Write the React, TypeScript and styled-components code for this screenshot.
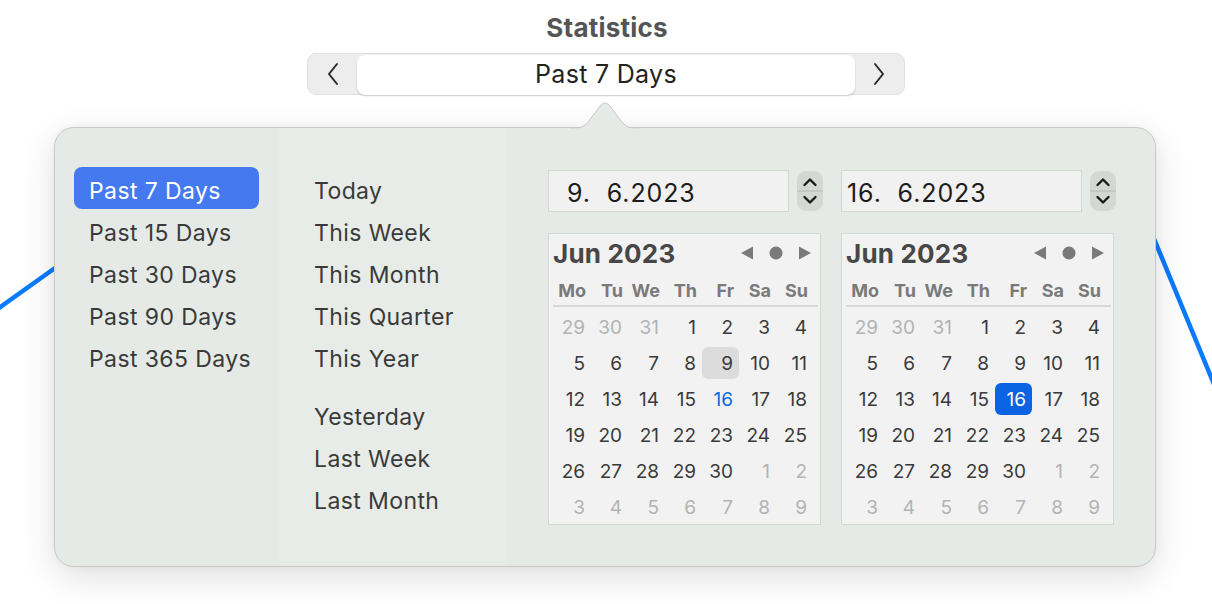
import React from 'react'
import styled, { createGlobalStyle } from 'styled-components'

const GlobalStyle = createGlobalStyle`
  html, body {
    margin: 0;
    padding: 0;
    background: #ffffff;
  }
  body {
    font-family: Inter, 'Noto Sans', 'Liberation Sans', sans-serif;
    color: #333333;
    -webkit-font-smoothing: antialiased;
  }
`

const presets = ['Past 7 Days', 'Past 15 Days', 'Past 30 Days', 'Past 90 Days', 'Past 365 Days']
const periods = ['Today', 'This Week', 'This Month', 'This Quarter', 'This Year']
const previous = ['Yesterday', 'Last Week', 'Last Month']
const weekdays = ['Mo', 'Tu', 'We', 'Th', 'Fr', 'Sa', 'Su']

type Day = { n: number; muted?: boolean }

function buildJune(): Day[][] {
  const days: Day[] = [
    { n: 29, muted: true },
    { n: 30, muted: true },
    { n: 31, muted: true },
  ]
  for (let i = 1; i <= 30; i++) days.push({ n: i })
  for (let i = 1; i <= 9; i++) days.push({ n: i, muted: true })
  const weeks: Day[][] = []
  for (let w = 0; w < 6; w++) weeks.push(days.slice(w * 7, w * 7 + 7))
  return weeks
}

const june = buildJune()

function Chevron({ dir }: { dir: 'left' | 'right' }) {
  return (
    <svg width="14" height="24" viewBox="0 0 14 24">
      <path
        d={dir === 'left' ? 'M11 2 L3 12 L11 22' : 'M3 2 L11 12 L3 22'}
        fill="none"
        stroke="#2a2a2a"
        strokeWidth="2"
        strokeLinecap="round"
        strokeLinejoin="round"
      />
    </svg>
  )
}

function Stepper() {
  return (
    <StepperBox>
      <svg width="26" height="40" viewBox="0 0 26 40">
        <path d="M7.5 14 L13 8.5 L18.5 14" fill="none" stroke="#1a1a1a" strokeWidth="2.4" strokeLinecap="round" strokeLinejoin="round" />
        <line x1="0" y1="20" x2="26" y2="20" stroke="#b5b9b5" strokeWidth="1.2" />
        <path d="M7.5 26 L13 31.5 L18.5 26" fill="none" stroke="#1a1a1a" strokeWidth="2.4" strokeLinecap="round" strokeLinejoin="round" />
      </svg>
    </StepperBox>
  )
}

function MonthNav() {
  return (
    <Nav>
      <svg width="70" height="16" viewBox="0 0 70 16">
        <path d="M0 8 L12 1.5 L12 14.5 Z" fill="#7a7a7a" />
        <circle cx="35" cy="8" r="6.5" fill="#7a7a7a" />
        <path d="M70 8 L58 1.5 L58 14.5 Z" fill="#7a7a7a" />
      </svg>
    </Nav>
  )
}

function Calendar({ mode }: { mode: 'start' | 'end' }) {
  return (
    <CalendarBox>
      <CalHeader>
        <MonthTitle>Jun 2023</MonthTitle>
        <MonthNav />
      </CalHeader>
      <WeekRow>
        {weekdays.map((d) => (
          <WeekdayCell key={d}>{d}</WeekdayCell>
        ))}
      </WeekRow>
      <Divider />
      <DayGrid>
        {june.map((week, wi) =>
          week.map((day, di) => {
            const current = !day.muted
            const isPicked = current && ((mode === 'start' && day.n === 9) || (mode === 'end' && day.n === 16))
            const isToday = current && day.n === 16
            return (
              <DayCell
                key={`${wi}-${di}`}
                $muted={!!day.muted}
                $today={isToday && mode === 'start'}
                $picked={isPicked ? (mode === 'end' ? 'blue' : 'gray') : undefined}
              >
                {day.n}
              </DayCell>
            )
          })
        )}
      </DayGrid>
    </CalendarBox>
  )
}

function DateColumn({ value, mode }: { value: string; mode: 'start' | 'end' }) {
  return (
    <DateStack>
      <FieldRow>
        <DateField $indent={mode === 'start'}>{value}</DateField>
        <Stepper />
      </FieldRow>
      <Calendar mode={mode} />
    </DateStack>
  )
}

export default function App() {
  return (
    <Page>
      <GlobalStyle />
      <Chart width="1212" height="604" viewBox="0 0 1212 604">
        <line x1="-4" y1="310" x2="62" y2="263" stroke="#0a7aff" strokeWidth="4.5" />
        <line x1="1150" y1="229" x2="1216" y2="389" stroke="#0a7aff" strokeWidth="4.5" />
      </Chart>
      <Content>
        <Title>Statistics</Title>
        <Segmented>
          <SegButton>
            <Chevron dir="left" />
          </SegButton>
          <SegLabel>Past 7 Days</SegLabel>
          <SegButton>
            <Chevron dir="right" />
          </SegButton>
        </Segmented>
        <Popover>
          <Arrow width="70" height="27" viewBox="0 0 70 27">
            <path
              d="M0 26.5 C10 26.5 14 25 18 20 L31 3 C33 0.5 37 0.5 39 3 L52 20 C56 25 60 26.5 70 26.5"
              fill="#e6eae6"
              stroke="#c6c9c6"
              strokeWidth="1"
            />
            <rect x="0" y="26.4" width="70" height="1" fill="#e6eae6" />
          </Arrow>
          <PresetColumn>
            {presets.map((p, i) => (
              <PresetItem key={p} $active={i === 0}>
                {p}
              </PresetItem>
            ))}
          </PresetColumn>
          <PeriodColumn>
            <ItemGroup>
              {periods.map((p) => (
                <PeriodItem key={p}>{p}</PeriodItem>
              ))}
            </ItemGroup>
            <ItemGroup>
              {previous.map((p) => (
                <PeriodItem key={p}>{p}</PeriodItem>
              ))}
            </ItemGroup>
          </PeriodColumn>
          <RangeColumn>
            <DateColumn value={'9.  6.2023'} mode="start" />
            <DateColumn value={'16.  6.2023'} mode="end" />
          </RangeColumn>
        </Popover>
      </Content>
    </Page>
  )
}

const Page = styled.div`
  position: relative;
  width: 1212px;
  height: 604px;
  overflow: hidden;
  background: #ffffff;
`

const Chart = styled.svg`
  position: absolute;
  left: 0;
  top: 0;
  z-index: 0;
`

const Content = styled.div`
  position: relative;
  z-index: 1;
  display: flex;
  flex-direction: column;
  align-items: center;
  padding-top: 12px;
`

const Title = styled.div`
  font-size: 26px;
  font-weight: 700;
  line-height: 32px;
  color: #555555;
  letter-spacing: 0.2px;
  margin-left: 2px;
`

const Segmented = styled.div`
  margin-top: 9px;
  display: flex;
  align-items: center;
  width: 598px;
  height: 42px;
  box-sizing: border-box;
  padding: 1px;
  background: #ededed;
  border: 1px solid #e2e2e2;
  border-radius: 9px;
`

const SegButton = styled.div`
  width: 48px;
  height: 100%;
  display: flex;
  align-items: center;
  justify-content: center;
`

const SegLabel = styled.div`
  flex: 1;
  height: 40px;
  margin-top: 1px;
  padding-bottom: 2px;
  box-sizing: border-box;
  display: flex;
  align-items: center;
  justify-content: center;
  background: #ffffff;
  border-radius: 8px;
  box-shadow: 0 1px 1.5px rgba(0, 0, 0, 0.22);
  font-size: 25px;
  letter-spacing: 0.3px;
  color: #222222;
`

const Popover = styled.div`
  position: relative;
  margin-top: 32px;
  margin-left: -2px;
  width: 1102px;
  height: 440px;
  box-sizing: border-box;
  display: flex;
  background: #e6eae6;
  border: 1px solid #c6c9c6;
  border-radius: 20px;
  box-shadow: 0 10px 34px rgba(0, 0, 0, 0.13), 0 0 8px rgba(0, 0, 0, 0.04);
`

const Arrow = styled.svg`
  position: absolute;
  top: -26px;
  left: 515px;
`

const PresetColumn = styled.div`
  width: 224px;
  box-sizing: border-box;
  padding: 39px 20px 0 19px;
  display: flex;
  flex-direction: column;
`

const PresetItem = styled.div<{ $active: boolean }>`
  height: 42px;
  display: flex;
  align-items: center;
  padding-left: 15px;
  padding-top: 5px;
  box-sizing: border-box;
  border-radius: 8px;
  font-size: 23px;
  letter-spacing: 0.4px;
  background: ${(p) => (p.$active ? '#4479f0' : 'transparent')};
  color: ${(p) => (p.$active ? '#ffffff' : '#3a3a3a')};
`

const PeriodColumn = styled.div`
  width: 228px;
  box-sizing: border-box;
  padding: 39px 0 0 35px;
  display: flex;
  flex-direction: column;
  gap: 16px;
  background: #e8ece8;
`

const ItemGroup = styled.div`
  display: flex;
  flex-direction: column;
`

const PeriodItem = styled.div`
  height: 42px;
  display: flex;
  align-items: center;
  padding-top: 5px;
  box-sizing: border-box;
  font-size: 23px;
  letter-spacing: 0.4px;
  color: #3a3a3a;
`

const RangeColumn = styled.div`
  flex: 1;
  display: flex;
  gap: 18px;
  padding: 42px 0 0 41px;
`

const DateStack = styled.div`
  display: flex;
  flex-direction: column;
  gap: 21px;
`

const FieldRow = styled.div`
  display: flex;
  align-items: center;
  gap: 8px;
`

const DateField = styled.div<{ $indent: boolean }>`
  width: 241px;
  height: 42px;
  box-sizing: border-box;
  display: flex;
  align-items: center;
  padding-top: 3px;
  padding-left: ${(p) => (p.$indent ? '18px' : '5px')};
  background: #f1f1f1;
  border: 1.5px solid #d3d8d3;
  font-size: 25px;
  color: #1c1c1c;
  white-space: pre;
  letter-spacing: 0.9px;
`

const StepperBox = styled.div`
  width: 26px;
  height: 40px;
  border-radius: 9px;
  background: #d4d8d4;
  overflow: hidden;
  display: flex;
`

const CalendarBox = styled.div`
  width: 273px;
  height: 292px;
  box-sizing: border-box;
  background: #f2f2f2;
  border: 1.5px solid #d3d8d3;
  padding: 0 5px 0 5px;
`

const CalHeader = styled.div`
  display: flex;
  align-items: center;
  justify-content: space-between;
  height: 36px;
  padding-top: 1px;
`

const MonthTitle = styled.div`
  font-size: 26px;
  font-weight: 700;
  color: #474747;
  margin-left: -1px;
  letter-spacing: 0.2px;
`

const Nav = styled.div`
  display: flex;
  align-items: center;
  margin-right: 4px;
`

const WeekRow = styled.div`
  display: grid;
  grid-template-columns: repeat(7, 37px);
  height: 34px;
  padding-top: 4px;
  box-sizing: border-box;
  align-items: center;
`

const WeekdayCell = styled.div`
  text-align: right;
  padding-right: 5px;
  font-size: 18px;
  font-weight: 700;
  color: #7a7a7a;
`

const Divider = styled.div`
  height: 2px;
  background: #d8d8d8;
  margin: 0 0 2px -1px;
  width: 265px;
`

const DayGrid = styled.div`
  display: grid;
  grid-template-columns: repeat(7, 37px);
  grid-auto-rows: 36px;
`

const DayCell = styled.div<{ $muted: boolean; $today?: boolean; $picked?: 'gray' | 'blue' }>`
  display: flex;
  align-items: center;
  justify-content: flex-end;
  padding-right: 6px;
  margin: 2px 0;
  border-radius: 6px;
  font-size: 19px;
  color: ${(p) =>
    p.$picked === 'blue' ? '#ffffff' : p.$today ? '#0a6ae0' : p.$muted ? '#b3b3b3' : '#3a3a3a'};
  background: ${(p) => (p.$picked === 'blue' ? '#0a63e0' : p.$picked === 'gray' ? '#dcdcdc' : 'transparent')};
`
